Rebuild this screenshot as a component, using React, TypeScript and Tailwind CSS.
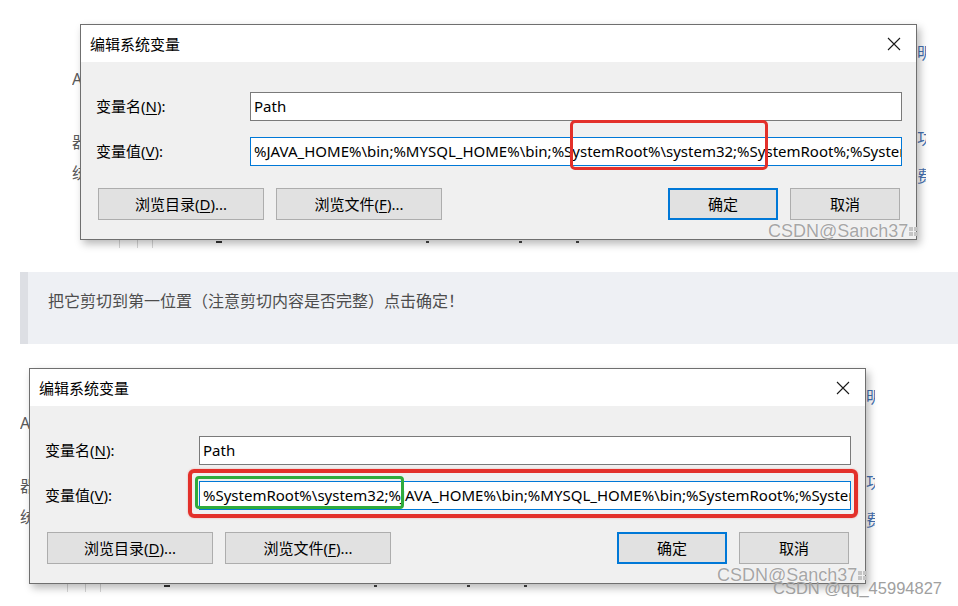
import React from 'react';

const VAL1 = '%JAVA_HOME%\\bin;%MYSQL_HOME%\\bin;%SystemRoot%\\system32;%SystemRoot%;%SystemRoot%\\System32\\Wbem;%SYSTEMROOT%';
const VAL2 = '%SystemRoot%\\system32;%JAVA_HOME%\\bin;%MYSQL_HOME%\\bin;%SystemRoot%;%SystemRoot%\\System32\\Wbem;%SYSTEMROOT%';

function CloseIcon() {
  return (
    <svg width="14" height="14" viewBox="0 0 14 14" className="block">
      <path d="M1 1 L13 13 M13 1 L1 13" stroke="#1a1a1a" strokeWidth="1.1" fill="none" />
    </svg>
  );
}

function Btn({ children, primary }: { children: React.ReactNode; primary?: boolean }) {
  return (
    <div
      className={
        primary
          ? 'h-[32px] w-[110px] flex items-center justify-center bg-[#e1e1e1] border-2 border-[#0078d7] text-[15px] text-black'
          : 'h-[32px] flex items-center justify-center bg-[#e1e1e1] border border-[#adadad] text-[15px] text-black'
      }
    >
      {children}
    </div>
  );
}

function Dialog({ value, children }: { value: string; children?: React.ReactNode }) {
  return (
    <div className="relative w-[837px] h-[216px] border border-[#6f6f6f] bg-[#f0f0f0] flex flex-col shadow-[3px_4px_8px_rgba(0,0,0,0.28)] font-['Segoe_UI','Noto_Sans','Noto_Sans_CJK_SC',sans-serif] text-black">
      <div className="h-[37px] bg-white flex items-center justify-between pl-[9px] pr-[15px]">
        <span className="text-[15px] leading-[20px]">编辑系统变量</span>
        <CloseIcon />
      </div>
      <div className="flex flex-col pt-[30px]">
        <div className="flex items-center pl-[15px] h-[29px]">
          <div className="w-[154px] text-[15px]">
            变量名(<span className="underline underline-offset-2">N</span>):
          </div>
          <div className="w-[652px] h-[29px] bg-white border border-[#7a7a7a] flex items-center pl-[3px] text-[15px] overflow-hidden whitespace-nowrap">
            Path
          </div>
        </div>
        <div className="flex items-center pl-[15px] h-[29px] mt-[16px]">
          <div className="w-[154px] text-[15px]">
            变量值(<span className="underline underline-offset-2">V</span>):
          </div>
          <div className="w-[652px] h-[29px] bg-white border border-[#0078d7] flex items-center pl-[3px] text-[15px] overflow-hidden whitespace-nowrap">
            {value}
          </div>
        </div>
        <div className="flex items-center justify-between pl-[17px] pr-[16px] mt-[22px]">
          <div className="flex gap-[12px]">
            <div className="w-[166px]">
              <Btn>
                浏览目录(<span className="underline underline-offset-2">D</span>)...
              </Btn>
            </div>
            <div className="w-[166px]">
              <Btn>
                浏览文件(<span className="underline underline-offset-2">F</span>)...
              </Btn>
            </div>
          </div>
          <div className="flex gap-[12px]">
            <Btn primary>确定</Btn>
            <div className="w-[110px]">
              <Btn>取消</Btn>
            </div>
          </div>
        </div>
      </div>
      {children}
    </div>
  );
}

function LeftStrip({ w }: { w: string }) {
  return (
    <div className={w + ' overflow-hidden flex flex-col whitespace-nowrap text-[16px] leading-[16px] text-[#5a5a5a] font-["Noto_Sans","Noto_Sans_CJK_SC",sans-serif]'}>
      <span className="mt-[47px]">A</span>
      <span className="mt-[47px]">器</span>
      <span className="mt-[15px]">统</span>
    </div>
  );
}

function RightStrip({ w }: { w: string }) {
  return (
    <div className={w + ' overflow-hidden flex flex-col whitespace-nowrap text-[16px] leading-[16px] text-[#4470b0] font-["Noto_Sans","Noto_Sans_CJK_SC",sans-serif]'}>
      <span className="mt-[21px]">明</span>
      <span className="mt-[69px]">功</span>
      <span className="mt-[22px]">费</span>
    </div>
  );
}

function BottomStrip() {
  return (
    <div className="h-[8px] flex items-start bg-white">
      <div className="ml-[47px] w-px h-[8px] bg-[#d6d6d6]" />
      <div className="ml-[17px] w-px h-[8px] bg-[#d6d6d6]" />
      <div className="ml-[14px] w-px h-[8px] bg-[#d6d6d6]" />
      <div className="ml-[63px] mt-px w-[6px] h-[2px] bg-[#333]" />
      <div className="ml-[204px] mt-px w-[3px] h-[2px] bg-[#444]" />
      <div className="ml-[90px] mt-px w-[3px] h-[2px] bg-[#444]" />
      <div className="ml-[54px] mt-px w-[3px] h-[2px] bg-[#444]" />
    </div>
  );
}

function GridMark() {
  return (
    <svg width="9" height="11" viewBox="0 0 9 11" className="inline-block ml-px align-baseline">
      <rect x="0" y="1" width="4" height="4" fill="#c4c4c4" />
      <rect x="5" y="1" width="4" height="4" fill="#c4c4c4" />
      <rect x="0" y="6" width="4" height="4" fill="#c4c4c4" />
      <rect x="5" y="6" width="4" height="4" fill="#c4c4c4" />
    </svg>
  );
}

function Watermark({ className }: { className: string }) {
  return (
    <div className={className + " absolute whitespace-nowrap text-[18px] leading-[18px] text-[#a6a6a6] font-['Liberation_Sans',Arial,sans-serif] [text-shadow:0_0_1px_#fff,0_0_1px_#fff]"}>
      CSDN@Sanch37
      <GridMark />
    </div>
  );
}

export default function App() {
  return (
    <div className="relative w-[958px] h-[606px] bg-white overflow-hidden">
      {/* first screenshot */}
      <div className="pt-[24px] pl-[72px]">
        <div className="relative inline-flex flex-col">
          <div className="flex">
            <LeftStrip w="w-[8px]" />
            <Dialog value={VAL1}>
              <div className="absolute left-[489px] top-[95px] w-[198px] h-[50px] border-[3px] border-[#e3302a] rounded-[5px]" />
            </Dialog>
            <RightStrip w="w-[9px]" />
          </div>
          <BottomStrip />
          <Watermark className="left-[696px] top-[198px]" />
        </div>
      </div>

      {/* quote */}
      <div className="mt-[24px] ml-[20px] border-l-[8px] border-[#dddfe4] bg-[#eef0f4] pt-[16px] pb-[16px] pl-[20px]">
        <p className="text-[16px] leading-[24px] mb-[16px] text-[#4d4d4d] font-['Noto_Sans_CJK_SC',sans-serif]">
          把它剪切到第一位置（注意剪切内容是否完整）点击确定！
        </p>
      </div>

      {/* second screenshot */}
      <div className="mt-[24px] pl-[20px]">
        <div className="relative inline-flex flex-col">
          <div className="flex">
            <LeftStrip w="w-[9px]" />
            <Dialog value={VAL2}>
              <div className="absolute left-[158px] top-[100px] w-[670px] h-[49px] border-[4px] border-[#e3302a] rounded-[6px] shadow-[0_0_2px_rgba(227,48,42,0.4)]" />
              <div className="absolute left-[165px] top-[107px] w-[209px] h-[33px] border-[3px] border-[#2fab3c] rounded-[4px]" />
            </Dialog>
            <RightStrip w="w-[9px]" />
          </div>
          <BottomStrip />
          <Watermark className="left-[697px] top-[198px]" />
        </div>
      </div>

      <div className="absolute left-[773px] top-[580px] whitespace-nowrap text-[16.5px] leading-[17px] text-[#a0a0a0] font-['Liberation_Sans',Arial,sans-serif]">
        CSDN @qq_45994827
      </div>
    </div>
  );
}
